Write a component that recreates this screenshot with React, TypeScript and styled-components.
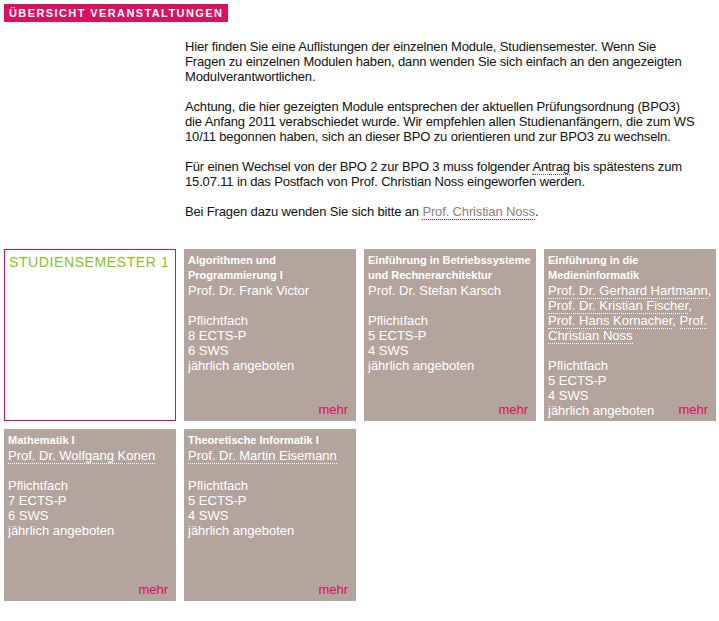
import React from 'react';
import styled, { createGlobalStyle } from 'styled-components';

interface Module {
  title: string[];
  profs: string[];
  underline: boolean;
  ects: number;
  sws: number;
}

const modules: Module[] = [
  {
    title: ['Algorithmen und', 'Programmierung I'],
    profs: ['Prof. Dr. Frank Victor'],
    underline: false,
    ects: 8,
    sws: 6,
  },
  {
    title: ['Einführung in Betriebssysteme', 'und Rechnerarchitektur'],
    profs: ['Prof. Dr. Stefan Karsch'],
    underline: false,
    ects: 5,
    sws: 4,
  },
  {
    title: ['Einführung in die', 'Medieninformatik'],
    profs: [
      'Prof. Dr. Gerhard Hartmann',
      'Prof. Dr. Kristian Fischer',
      'Prof. Hans Kornacher',
      'Prof. Christian Noss',
    ],
    underline: true,
    ects: 5,
    sws: 4,
  },
  {
    title: ['Mathematik I'],
    profs: ['Prof. Dr. Wolfgang Konen'],
    underline: true,
    ects: 7,
    sws: 6,
  },
  {
    title: ['Theoretische Informatik I'],
    profs: ['Prof. Dr. Martin Eisemann'],
    underline: true,
    ects: 5,
    sws: 4,
  },
];

const GlobalStyle = createGlobalStyle`
  body {
    margin: 0;
    background: #fff;
    font-family: "Liberation Sans", Arial, sans-serif;
  }
`;

function App() {
  return (
    <Page>
      <GlobalStyle />
      <Heading>Übersicht Veranstaltungen</Heading>
      <Intro>
        <p>
          Hier finden Sie eine Auflistungen der einzelnen Module, Studiensemester. Wenn Sie
          <br />
          Fragen zu einzelnen Modulen haben, dann wenden Sie sich einfach an den angezeigten
          <br />
          Modulverantwortlichen.
        </p>
        <p>
          Achtung, die hier gezeigten Module entsprechen der aktuellen Prüfungsordnung (BPO3)
          <br />
          die Anfang 2011 verabschiedet wurde. Wir empfehlen allen Studienanfängern, die zum WS
          <br />
          10/11 begonnen haben, sich an dieser BPO zu orientieren und zur BPO3 zu wechseln.
        </p>
        <p>
          Für einen Wechsel von der BPO 2 zur BPO 3 muss folgender <TextLink>Antrag</TextLink> bis
          spätestens zum
          <br />
          15.07.11 in das Postfach von Prof. Christian Noss eingeworfen werden.
        </p>
        <p>
          Bei Fragen dazu wenden Sie sich bitte an <TextLink $muted>Prof. Christian Noss</TextLink>.
        </p>
      </Intro>
      <Grid>
        <SemesterBox>Studiensemester 1</SemesterBox>
        {modules.map((m, index) => (
          <Tile key={index}>
            <TileTitle>
              {m.title.map((t, i) => (
                <div key={i}>{t}</div>
              ))}
            </TileTitle>
            <Profs>
              {m.profs.map((p, i) => (
                <React.Fragment key={i}>
                  <Prof $underline={m.underline}>{p}</Prof>
                  {i < m.profs.length - 1 ? ', ' : ''}
                </React.Fragment>
              ))}
            </Profs>
            <div>
              <div>Pflichtfach</div>
              <div>{m.ects} ECTS-P</div>
              <div>{m.sws} SWS</div>
              <div>jährlich angeboten</div>
            </div>
            <More>mehr</More>
          </Tile>
        ))}
      </Grid>
    </Page>
  );
}

const Page = styled.div`
  padding: 4px;
  width: 711px;
`;

const Heading = styled.h1`
  display: block;
  width: fit-content;
  margin: 0;
  padding: 0 5px;
  height: 18px;
  line-height: 18px;
  background: #d8125f;
  color: #fff;
  font-size: 11px;
  font-weight: bold;
  letter-spacing: 1.4px;
  text-transform: uppercase;
`;

const Intro = styled.div`
  margin: 17px 0 0 181px;
  width: 534px;
  font-size: 13px;
  line-height: 15px;
  letter-spacing: -0.15px;
  white-space: nowrap;
  color: #111;
  p {
    margin: 0 0 15px;
  }
  p:last-child {
    margin-bottom: 0;
  }
`;

const TextLink = styled.a<{ $muted?: boolean }>`
  color: ${(p) => (p.$muted ? '#8c817c' : '#111')};
  border-bottom: 1px dotted #d8125f;
  text-decoration: none;
`;

const Grid = styled.div`
  display: grid;
  grid-template-columns: repeat(4, 172px);
  grid-auto-rows: 172px;
  gap: 8px;
  margin-top: 30px;
`;

const SemesterBox = styled.div`
  box-sizing: border-box;
  border: 1px solid #d8125f;
  padding: 4px 4px;
  color: #86c41a;
  font-size: 14px;
  letter-spacing: 0.6px;
  white-space: nowrap;
  text-transform: uppercase;
`;

const Tile = styled.div`
  position: relative;
  box-sizing: border-box;
  padding: 4px 4px;
  background: #b3a59e;
  color: #fff;
  font-size: 13px;
  line-height: 15px;
`;

const TileTitle = styled.div`
  font-size: 11px;
  font-weight: bold;
`;

const Profs = styled.div`
  margin-bottom: 15px;
`;

const Prof = styled.span<{ $underline: boolean }>`
  border-bottom: ${(p) => (p.$underline ? '1px dotted #fff' : 'none')};
`;

const More = styled.a`
  position: absolute;
  right: 8px;
  bottom: 4px;
  color: #d8125f;
  font-size: 13px;
  line-height: 15px;
`;

export default App;
